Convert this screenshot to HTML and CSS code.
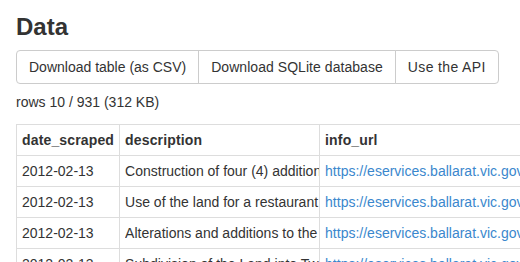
FILE: index.html
```html
<!DOCTYPE html>
<html>
<head>
<meta charset="utf-8">
<link rel="stylesheet" href="styles.css">
</head>
<body>
<div class="page">
  <h2 class="title">Data</h2>
  <div class="btn-group">
    <a class="btn">Download table (as CSV)</a>
    <a class="btn">Download SQLite database</a>
    <a class="btn">Use the API</a>
  </div>
  <p class="meta">rows 10 / 931 (312 KB)</p>
  <table class="data">
    <thead>
      <tr><th>date_scraped</th><th class="clip"><div>description</div></th><th>info_url</th><th>council_reference</th></tr>
    </thead>
    <tbody>
      <tr><td>2012-02-13</td><td class="clip"><div>Construction of four (4) additional dwellings</div></td><td><a>https://eservices.ballarat.vic.gov.au/ePathway/Production/Web/</a></td><td>PLP/2012/0045</td></tr>
      <tr><td>2012-02-13</td><td class="clip"><div>Use of the land for a restaurant and sale of liquor</div></td><td><a>https://eservices.ballarat.vic.gov.au/ePathway/Production/Web/</a></td><td>PLP/2012/0046</td></tr>
      <tr><td>2012-02-13</td><td class="clip"><div>Alterations and additions to the existing dwelling</div></td><td><a>https://eservices.ballarat.vic.gov.au/ePathway/Production/Web/</a></td><td>PLP/2012/0047</td></tr>
      <tr><td>2012-02-13</td><td class="clip"><div>Subdivision of the Land into Two Lots</div></td><td><a>https://eservices.ballarat.vic.gov.au/ePathway/Production/Web/</a></td><td>PLS/2012/0012</td></tr>
      <tr><td>2012-02-13</td><td class="clip"><div>Buildings and works for a shed</div></td><td><a>https://eservices.ballarat.vic.gov.au/ePathway/Production/Web/</a></td><td>PLP/2012/0048</td></tr>
    </tbody>
  </table>
</div>
</body>
</html>
```
FILE: styles.css
```css
html, body {
  margin: 0;
  padding: 0;
  background: #fff;
  overflow: hidden;
}
body {
  font-family: "Liberation Sans", Arial, sans-serif;
  font-size: 14px;
  line-height: 20px;
  color: #333;
}
.page {
  padding: 0 16px;
}
.title {
  margin: 14px 0 10px;
  font-size: 24px;
  line-height: 26px;
  font-weight: bold;
  color: #333;
}
.btn-group {
  display: inline-flex;
}
.btn {
  display: block;
  padding: 6px 12px;
  border: 1px solid #ccc;
  background: #fff;
  color: #333;
  white-space: nowrap;
}
.btn + .btn {
  margin-left: -1px;
}
.btn:first-child {
  border-radius: 4px 0 0 4px;
}
.btn:nth-child(2) {
  letter-spacing: 0.05px;
}
.btn:last-child {
  border-radius: 0 4px 4px 0;
  letter-spacing: 0.35px;
}
.meta {
  margin: 8px 0 12px;
}
.data {
  border-collapse: collapse;
  border: 1px solid #ddd;
  white-space: nowrap;
}
.data th, .data td {
  border: 1px solid #ddd;
  padding: 5px;
  text-align: left;
  vertical-align: top;
}
.data th {
  font-weight: bold;
  letter-spacing: 0.15px;
}
.data .clip {
  padding-right: 0;
}
.data .clip div {
  width: 194px;
  overflow: hidden;
}
.data a {
  color: #3a87cd;
}
```
